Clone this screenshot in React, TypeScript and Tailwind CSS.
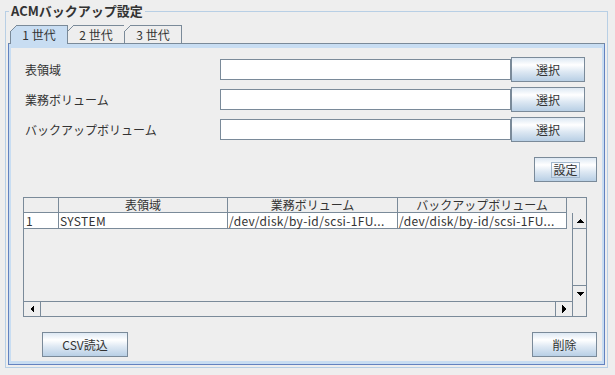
import React from "react";

function Button({ className, children }: { className: string; children: React.ReactNode }) {
  return (
    <div
      className={`${className} h-[25px] shrink-0 border border-[#7a8a99] bg-[linear-gradient(to_bottom,#dde8f3_0%,#ffffff_30%,#dde8f3_60%,#b8cfe5_100%)] flex items-center justify-center text-[12px] text-[#333333]`}
    >
      {children}
    </div>
  );
}

function Corner() {
  const rows = [0, 1, 2, 3, 4, 5, 6];
  return (
    <svg width="7" height="7" className="absolute left-[-1px] top-[-1px]" shapeRendering="crispEdges">
      {rows.map((i) => (
        <g key={i}>
          {6 - i > 0 && <rect x={0} y={i} width={6 - i} height={1} fill="#eeeeee" />}
          <rect x={6 - i} y={i} width={1} height={1} fill="#7a8a99" />
        </g>
      ))}
    </svg>
  );
}

function Arrow({ dir }: { dir: "up" | "down" | "left" | "right" }) {
  if (dir === "up")
    return (
      <svg width="8" height="4" shapeRendering="crispEdges">
        <polygon points="4,0 8,4 0,4" fill="#000" />
      </svg>
    );
  if (dir === "down")
    return (
      <svg width="8" height="4" shapeRendering="crispEdges">
        <polygon points="0,0 8,0 4,4" fill="#000" />
      </svg>
    );
  if (dir === "left")
    return (
      <svg width="4" height="8" shapeRendering="crispEdges">
        <polygon points="4,0 4,8 0,4" fill="#000" />
      </svg>
    );
  return (
    <svg width="4" height="8" shapeRendering="crispEdges">
      <polygon points="0,0 4,4 0,8" fill="#000" />
    </svg>
  );
}

function FormRow({ label }: { label: string }) {
  return (
    <div className="flex items-center h-[25px]">
      <div className="w-[195px] shrink-0 text-[12px] text-[#333333]">{label}</div>
      <div className="w-[291px] h-[21px] shrink-0 bg-white border border-[#7a8a99]" />
      <Button className="w-[74px]">選択</Button>
    </div>
  );
}

export default function App() {
  return (
    <div className="w-[615px] h-[375px] bg-[#eeeeee] pt-[11px] pl-[5px] font-['Noto_Sans_CJK_JP',sans-serif] text-[#333333] text-[12px] leading-none">
      <div className="relative w-[603px] h-[357px] border border-[#b8cfe5] pt-[13px] px-[2px] pb-[2px] flex flex-col">
        <span className="absolute left-[3px] top-[-10px] bg-[#eeeeee] px-[2px] text-[13px] font-bold leading-[18px] text-[#333333]">
          ACMバックアップ設定
        </span>

        {/* tabs */}
        <div className="flex items-start h-[18px] pl-[2px] shrink-0">
          <div className="relative z-10 w-[58px] h-[19px] -mb-[1px] border-l border-t border-r border-[#7a8a99] bg-[#c8ddf2] flex items-center justify-center">
            <Corner />
            <span>1 世代</span>
          </div>
          <div className="relative w-[57px] h-[18px] border-t border-r border-[#7a8a99] bg-[#eeeeee] flex items-center justify-center">
            <Corner />
            <span>2 世代</span>
          </div>
          <div className="relative w-[57px] h-[18px] border-t border-r border-[#7a8a99] bg-[#eeeeee] flex items-center justify-center">
            <Corner />
            <span>3 世代</span>
          </div>
        </div>

        {/* content */}
        <div className="flex-1 border border-[#6382bf] border-t-[#7a8a99] bg-[#c8ddf2] pt-[4px] pl-[2px] pr-[2px] pb-[3px] flex">
          <div className="flex-1 bg-[#eeeeee] pt-[9px] flex flex-col">
            <div className="pl-[14px] flex flex-col gap-[5px]">
              <FormRow label="表領域" />
              <FormRow label="業務ボリューム" />
              <FormRow label="バックアップボリューム" />
            </div>

            <div className="mt-[15px] pr-[5px] flex justify-end">
              <Button className="w-[63px]">
                <span className="border border-[#a3b8cc] px-[1px] py-[1px]">設定</span>
              </Button>
            </div>

            {/* table */}
            <div className="ml-[12px] mt-[15px] w-[564px] h-[120px] border border-[#7a8a99] flex flex-col">
              <div className="flex h-[103px]">
                <div className="w-[548px] flex flex-col">
                  <div className="flex h-[15px] bg-[#eeeeee]">
                    <div className="w-[35px] border-r border-b border-[#7a8a99]" />
                    <div className="w-[169px] border-r border-b border-[#7a8a99] flex items-center justify-center">表領域</div>
                    <div className="w-[170px] border-r border-b border-[#7a8a99] flex items-center justify-center">業務ボリューム</div>
                    <div className="w-[169px] border-r border-b border-[#7a8a99] flex items-center justify-center">バックアップボリューム</div>
                  </div>
                  <div className="flex h-[16px] text-[12px] tracking-[0.35px]">
                    <div className="w-[35px] bg-white border-r border-b border-[#7a8a99] flex items-center pl-[2px]">1</div>
                    <div className="w-[169px] bg-white border-r border-b border-[#7a8a99] flex items-center pl-[1px]">SYSTEM</div>
                    <div className="w-[170px] bg-white border-r border-b border-[#7a8a99] flex items-center pl-[1px] whitespace-nowrap">/dev/disk/by-id/scsi-1FU...</div>
                    <div className="w-[169px] bg-white border-r border-b border-[#7a8a99] flex items-center pl-[1px] whitespace-nowrap">/dev/disk/by-id/scsi-1FU...</div>
                  </div>
                </div>
                <div className="w-[14px] flex flex-col">
                  <div className="h-[15px]" />
                  <div className="h-[88px] border-l border-[#7a8a99] flex flex-col justify-between">
                    <div className="h-[16px] border-b border-[#7a8a99] flex items-center justify-center">
                      <Arrow dir="up" />
                    </div>
                    <div className="h-[16px] border-t border-[#7a8a99] flex items-center justify-center">
                      <Arrow dir="down" />
                    </div>
                  </div>
                </div>
              </div>
              <div className="flex h-[15px]">
                <div className="w-[548px] border-t border-[#7a8a99] flex justify-between">
                  <div className="w-[17px] border-r border-[#7a8a99] flex items-center justify-center">
                    <Arrow dir="left" />
                  </div>
                  <div className="w-[17px] border-l border-[#7a8a99] flex items-center justify-center">
                    <Arrow dir="right" />
                  </div>
                </div>
                <div className="w-[14px] border-l border-[#7a8a99]" />
              </div>
            </div>

            <div className="mt-[15px] pl-[31px] pr-[5px] flex justify-between">
              <Button className="w-[86px]">CSV読込</Button>
              <Button className="w-[65px]">削除</Button>
            </div>
          </div>
        </div>
      </div>
    </div>
  );
}
